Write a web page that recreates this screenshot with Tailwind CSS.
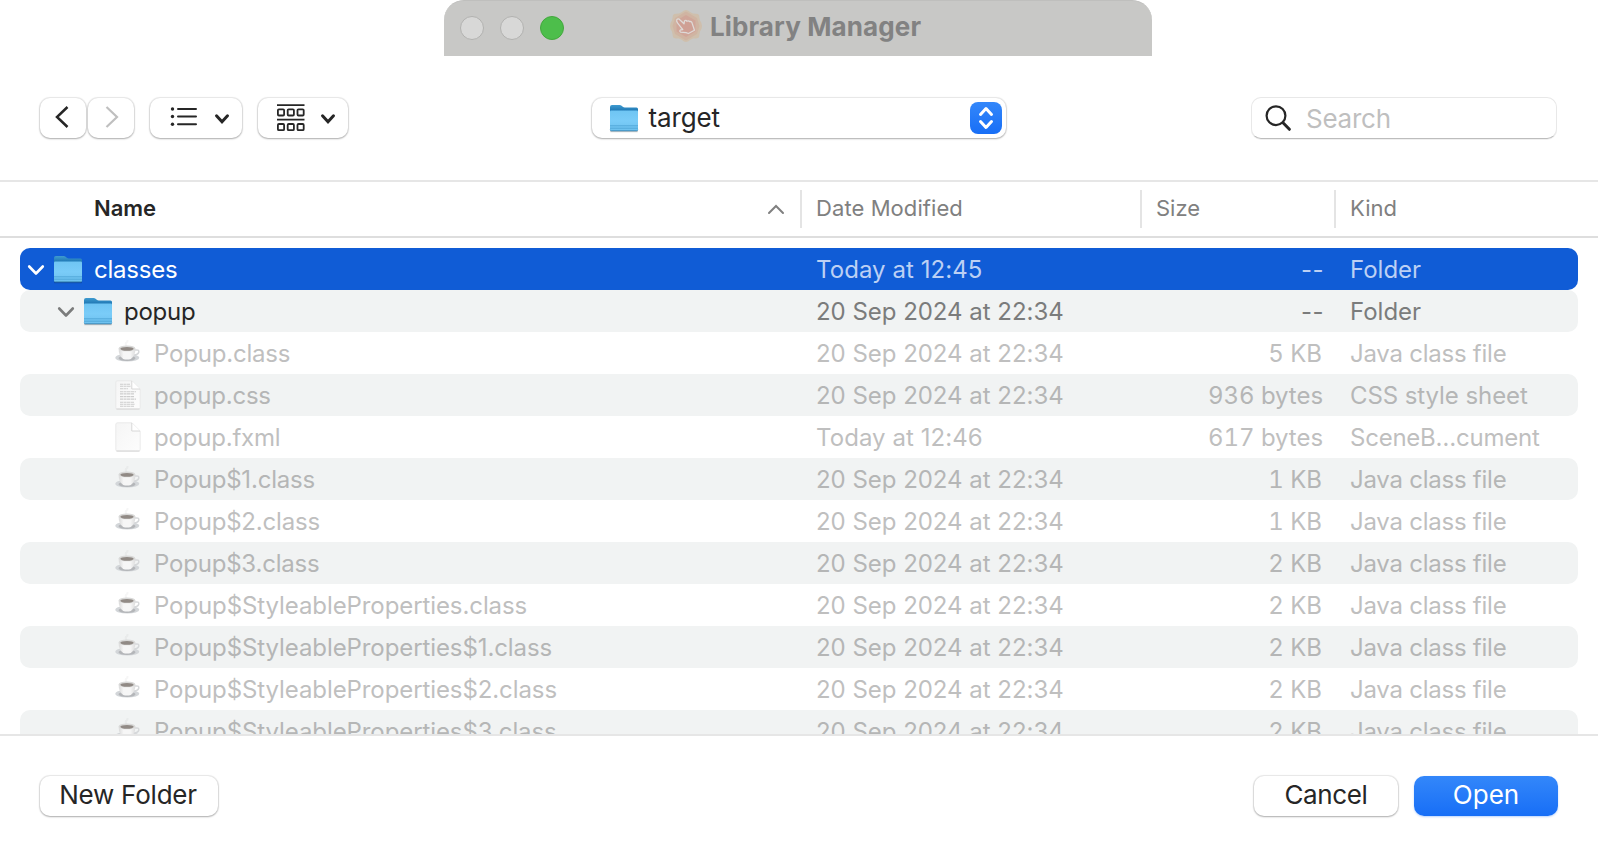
<!DOCTYPE html>
<html lang="en">
<head>
<meta charset="utf-8">
<title>Open</title>
<script src="https://cdn.jsdelivr.net/npm/@tailwindcss/browser@4"></script>
</head>
<body class="flex h-[856px] w-[1598px] flex-col overflow-hidden bg-white font-['Inter',sans-serif] text-[#262626]">

<svg class="absolute size-0">
  <defs>
    <linearGradient id="folderFront" x1="0" y1="0" x2="0" y2="1"><stop offset="0" stop-color="#6fc5f3"/><stop offset=".5" stop-color="#7accf8"/><stop offset="1" stop-color="#6cc0ee"/></linearGradient>
    <linearGradient id="folderBack" x1="0" y1="0" x2="0" y2="1"><stop offset="0" stop-color="#3f9bd0"/><stop offset=".4" stop-color="#1f78b4"/></linearGradient>
    <linearGradient id="paper" x1="0" y1="0" x2="1" y2="1"><stop offset="0" stop-color="#f5f5f5"/><stop offset="1" stop-color="#fdfdfd"/></linearGradient>
    <linearGradient id="cup" x1="0" y1="0" x2="1" y2="0"><stop offset="0" stop-color="#d9d9d9"/><stop offset=".3" stop-color="#f6f6f6"/><stop offset=".7" stop-color="#f6f6f6"/><stop offset="1" stop-color="#dcdcdc"/></linearGradient>
    <symbol id="folder" viewBox="0 0 30 29">
      <path d="M1.200 27h27.600v1.200H1.200z" fill="#000" opacity=".22"/>
      <path d="M1 3q0-2 2-2h7.600q1.200 0 2 .8l1.200 1q.8.8 2 .8H27.500q1.500 0 1.500 1.500V15H1z" fill="url(#folderBack)"/>
      <path d="M1 7.500Q1 6.500 2 6.500H28q1 0 1 1V25.500q0 1.500-1.500 1.500h-25Q1 27 1 25.500z" fill="url(#folderFront)"/>
      <path d="M1 21.800h28M1 24.200h28" stroke="#4ea5d6" stroke-width=".9"/>
      <path d="M1.200 25.800q.3 1 1.300 1h25q1 0 1.300-1" fill="none" stroke="#3a86b4" stroke-width=".9"/>
    </symbol>
    <symbol id="java" viewBox="0 0 26 26">
      <ellipse cx="12.300" cy="17.700" rx="12" ry="3.900" fill="#d3d6d9"/>
      <ellipse cx="12" cy="18.300" rx="8.500" ry="2.600" fill="#b4b6b9"/>
      <path d="M20 10q4.200-.6 3.800 2-.5 2.600-5.200 3.200" fill="none" stroke="#d6d8da" stroke-width="1.500"/>
      <path d="M3.600 8.500q0 7.500 4.600 10.400 3.800 1.400 7.600 0 4.600-2.900 4.600-10.400z" fill="url(#cup)"/>
      <ellipse cx="12" cy="8.400" rx="8.400" ry="2.900" fill="#d9d9d8"/>
      <ellipse cx="12" cy="8.800" rx="6.600" ry="1.900" fill="#918a85"/>
      <path d="M11.500 5.500q-1.500-1.500 0-3t.5-2.500" fill="none" stroke="#888" stroke-width="2" opacity=".08"/>
    </symbol>
    <symbol id="doc" viewBox="0 0 26 30">
      <path d="M.8 2.500Q.8.800 2.500.800H17L25.200 9V27.500q0 1.700-1.700 1.700h-21Q.8 29.200.8 27.500z" fill="url(#paper)" stroke="#e6e6e6" stroke-width=".8"/>
      <path d="M1.500 29h23" stroke="#d4d4d4" stroke-width="1"/>
      <path d="M16.800 1V9H25z" fill="#fff"/><path d="M16.800 1V9H25" fill="none" stroke="#d4d4d4" stroke-width=".9"/>
    </symbol>
    <symbol id="css" viewBox="0 0 26 30">
      <use href="#doc"/>
      <g stroke="#cdcdcd" stroke-width="1.100" fill="none" stroke-dasharray="3.500 .5 2 .4 4 .5">
        <path d="M5 4.200h10M5 6.300h11M5 8.700h8M5 11.800h16M5 13.900h14M5 16.600h14M5 19.100h16M5 22.300h14M5 24.300h15M5 26.200h14"/>
      </g>
    </symbol>
  </defs>
</svg>

<!-- Parent window title bar -->
<header class="ml-[444px] flex h-14 w-[708px] shrink-0 items-center rounded-t-[20px] border-t border-[#bfbfbd] bg-[#c8c8c6] pl-4">
  <div class="mb-px flex gap-4">
    <span class="size-6 rounded-full border border-[#b2b2b0] bg-[#d8d8d7]"></span>
    <span class="size-6 rounded-full border border-[#b2b2b0] bg-[#d8d8d7]"></span>
    <span class="size-6 rounded-full border border-[#43a83d] bg-[#4dbe4b]"></span>
  </div>
  <svg class="mb-[5px] ml-[106px] size-8" viewBox="0 0 32 32">
    <path d="M16 0q2 0 4 2l3 1.500q3 .2 5 .500 1.500 1 1.500 4l.5 2.500Q32 13 32 16t-2 5.500l-.5 2.500q0 3-1.500 4-2 .5-5 .5l-3 1.500q-2 2-4 2t-4-2l-3-1.500q-3 0-5-.5-1.500-1-1.500-4L2 21.500Q0 19 0 16t2-5.500L2.500 8q0-3 1.500-4 2-.3 5-.5L12 2q2-2 4-2z" fill="#cfbfac"/>
    <path d="M16 1.500l11 6.500 2.500 8-2.500 8-11 6.500L5 24l-2.500-8L5 8z" fill="#d0b4a2"/>
    <path d="M16 5l9.500 5.500v11L16 27l-9.500-5.500v-11z" fill="#d0a699"/>
    <path d="M6.800 9.600q1.500-1.500 3 .2l4.200 4 .5-2.800q1.300-1.200 2.500.3 1.500-1.100 2.600.4 1.600-.7 2.300.9l1.800 5.300.7 2.400-6 3.200-2.300-.8-5.600-.6q-1.500-1.300.3-2.300l2-.2-5.300-6.800q-1.300-1.500-.7-3.200z" fill="#cfa095" stroke="#dedad8" stroke-width="1.300" stroke-linejoin="round"/>
  </svg>
  <h1 class="mb-[3px] ml-2 text-[26px] leading-8 font-bold tracking-[0.12px] text-[#828282]">Library Manager</h1>
</header>

<!-- Toolbar -->
<div class="flex h-[124px] shrink-0 items-start pt-[42px] pl-10">
  <button class="flex h-10 w-[46px] items-center justify-center rounded-[10px] bg-white shadow-[0_0_1px_1px_rgba(0,0,0,0.09),0_1px_2px_rgba(0,0,0,0.26)]">
    <svg class="mr-[3px] mb-[3px] h-6 w-4" viewBox="0 0 16 24"><path d="M13.500 2 3 12l10.500 10" fill="none" stroke="#262626" stroke-width="2.500"/></svg>
  </button>
  <button class="ml-0.5 flex h-10 w-[46px] items-center justify-center rounded-[10px] bg-white shadow-[0_0_1px_1px_rgba(0,0,0,0.09),0_1px_2px_rgba(0,0,0,0.26)]">
    <svg class="mb-[3px] ml-0.5 h-6 w-4" viewBox="0 0 16 24"><path d="M2.500 2 13 12 2.500 22" fill="none" stroke="#bfbfbf" stroke-width="2.200"/></svg>
  </button>
  <button class="ml-4 flex h-10 w-[92px] items-start rounded-[10px] bg-white pt-[9px] pl-5 shadow-[0_0_1px_1px_rgba(0,0,0,0.09),0_1px_2px_rgba(0,0,0,0.26)]">
    <svg class="h-5 w-7" viewBox="0 0 28 20"><path d="M8 2h18M8 9.500h18M8 17.300h18" stroke="#262626" stroke-width="2" stroke-linecap="round"/><g fill="#262626"><circle cx="2.500" cy="2" r="1.700"/><circle cx="2.500" cy="9.500" r="1.700"/><circle cx="2.500" cy="17.300" r="1.700"/></g></svg>
    <svg class="mt-1.5 ml-4 h-3 w-4" viewBox="0 0 16 12"><path d="m2.500 2.800 5.500 6 5.500-6" fill="none" stroke="#262626" stroke-width="3" stroke-linecap="round"/></svg>
  </button>
  <button class="ml-4 flex h-10 w-[90px] items-start rounded-[10px] bg-white pt-1.5 pl-[19px] shadow-[0_0_1px_1px_rgba(0,0,0,0.09),0_1px_2px_rgba(0,0,0,0.26)]">
    <svg class="h-7 w-7" viewBox="0 0 28 28" fill="none" stroke="#262626" stroke-width="1.800"><path d="M0 1.200h27.500M0 15.700h27.500"/><g id="cells"><rect x=".9" y="5.300" width="6.200" height="6.200" rx="1"/><rect x="10.700" y="5.300" width="6.200" height="6.200" rx="1"/><rect x="20.500" y="5.300" width="6.200" height="6.200" rx="1"/></g><use href="#cells" y="14.700"/></svg>
    <svg class="mt-[9px] ml-[15px] h-3 w-4" viewBox="0 0 16 12"><path d="m2.500 2.800 5.500 6 5.500-6" fill="none" stroke="#262626" stroke-width="3" stroke-linecap="round"/></svg>
  </button>

  <button class="ml-[244px] flex h-10 w-[414px] items-start rounded-[10px] bg-white pt-1 pr-1 pl-[17px] text-left shadow-[0_0_1px_1px_rgba(0,0,0,0.09),0_1px_2px_rgba(0,0,0,0.26)]">
    <svg class="mt-[2px] h-[29px] w-[30px]"><use href="#folder"/></svg>
    <span class="-mt-1 ml-[9.500px] flex-1 text-[26px] leading-[39px] tracking-[-0.14px]">target</span>
    <svg class="size-8 rounded-lg bg-linear-to-b from-[#3387fa] to-[#176ef6]" viewBox="0 0 32 32"><path d="m10.500 12.500 5.500-6 5.500 6M10.500 19.500l5.500 6 5.500-6" fill="none" stroke="#fff" stroke-width="3" stroke-linecap="round" stroke-linejoin="round"/></svg>
  </button>

  <div class="-mt-px ml-[245px] flex h-[42px] w-[306px] items-start rounded-[10px] border border-[#e8e8e8] border-b-[#bdbdbd] bg-white pl-[13px] shadow-[0_1px_0_rgba(0,0,0,0.06)]">
    <svg class="mt-[7px] size-[27px]" viewBox="0 0 27 27" fill="none" stroke="#262626"><circle cx="11" cy="10.700" r="9.400" stroke-width="2.200"/><path d="m18 17.800 6.400 6.500" stroke-width="3" stroke-linecap="round"/></svg>
    <span class="ml-[14px] text-[26px] leading-[41px] tracking-[-0.25px] text-[#bfbfbf]">Search</span>
  </div>
</div>

<!-- Column headings -->
<div class="flex h-[58px] shrink-0 border-t-2 border-b-2 border-[#e6e6e6] border-b-[#dedede] text-[22px] leading-[52px] text-[#808080]">
  <div class="flex w-[800px] pl-[94px]">
    <span class="flex-1 font-semibold tracking-[-0.05px] text-[#262626]">Name</span>
    <svg class="mt-[21px] mr-[15px] h-3 w-[18px]" viewBox="0 0 18 12"><path d="m2 10 7-7 7 7" fill="none" stroke="#808080" stroke-width="2" stroke-linecap="round"/></svg>
  </div>
  <div class="mt-2 h-[38px] w-0.5 bg-[#e4e4e4]"></div>
  <div class="w-[338px] pl-[14px] tracking-[0.08px]">Date Modified</div>
  <div class="mt-2 h-[38px] w-0.5 bg-[#e4e4e4]"></div>
  <div class="w-[192px] pl-[14px]">Size</div>
  <div class="mt-2 h-[38px] w-0.5 bg-[#e4e4e4]"></div>
  <div class="pl-[14px]">Kind</div>
</div>

<!-- File list -->
<main id="list" class="h-[496px] shrink-0 overflow-hidden px-5 pt-2.5 text-[24px] leading-[44px]"></main>

<!-- Dialog buttons -->
<footer class="flex flex-1 items-start border-t-2 border-[#e6e6e6] px-10 pt-10 text-[26px] leading-[38px]">
  <button class="h-10 w-[178px] rounded-[10px] bg-white pr-0.5 pb-0.5 tracking-[-0.22px] shadow-[0_0_1px_1px_rgba(0,0,0,0.09),0_1px_2px_rgba(0,0,0,0.26)]">New Folder</button>
  <button class="ml-auto h-10 w-36 rounded-[10px] bg-white pb-0.5 tracking-[-0.35px] shadow-[0_0_1px_1px_rgba(0,0,0,0.09),0_1px_2px_rgba(0,0,0,0.26)]">Cancel</button>
  <button class="ml-4 h-10 w-36 rounded-[10px] bg-linear-to-b from-[#3387fa] to-[#176ef6] pb-0.5 text-white shadow-[0_1px_2px_rgba(23,110,246,0.3)]">Open</button>
</footer>

<script>
  const D = '20 Sep 2024 at 22:34', J = 'Java class file';
  const files = [
    ['java', 'Popup.class', D, '5 KB', J],
    ['css', 'popup.css', D, '936 bytes', 'CSS style sheet'],
    ['doc', 'popup.fxml', 'Today at 12:46', '617 bytes', 'SceneB…cument'],
    ['java', 'Popup$1.class', D, '1 KB', J],
    ['java', 'Popup$2.class', D, '1 KB', J],
    ['java', 'Popup$3.class', D, '2 KB', J],
    ['java', 'Popup$StyleableProperties.class', D, '2 KB', J],
    ['java', 'Popup$StyleableProperties$1.class', D, '2 KB', J],
    ['java', 'Popup$StyleableProperties$2.class', D, '2 KB', J],
    ['java', 'Popup$StyleableProperties$3.class', D, '2 KB', J],
  ];
  const chevron = '<svg class="mt-[16px] h-3 w-[18px]" viewBox="0 0 18 12"><path d="m2.200 2.500 6.800 7 6.800-7" fill="none" stroke="currentColor" stroke-width="2.600" stroke-linecap="round" stroke-linejoin="round"/></svg>';
  const folder = '<svg class="mt-[7px] ml-[8px] h-[29px] w-[30px]"><use href="#folder"/></svg>';
  const icons = {
    java: '<svg class="mt-[8px] size-[26px]"><use href="#java"/></svg>',
    css: '<svg class="mt-[6px] h-[30px] w-[26px]"><use href="#css"/></svg>',
    doc: '<svg class="mt-[6px] h-[30px] w-[26px]"><use href="#doc"/></svg>',
  };
  const cells = (date, size, kind) => {
    const sp = kind === J || kind[0] === 'S' ? 'tracking-[-0.24px]' : kind[0] === 'C' ? 'tracking-[-0.08px]' : 'tracking-normal';
    const fmt = size === '--' ? 'tracking-[0.5px]' : size.endsWith('KB') ? 'pr-[2px] tabular-nums' : 'pr-px tabular-nums tracking-[-0.05px]';
    const dt = date === D ? 'tracking-[-0.03px]' : 'tracking-[0.06px]';
    return `<div class="w-[334px] ${dt}">${date}</div><div class="w-[174px] text-right ${fmt}">${size}</div><div class="pl-[26px] ${sp}">${kind}</div>`;
  };
  let html =
    `<div class="flex h-[42px] rounded-[10px] bg-[#105cd6] text-[#bcd0f4]"><div class="flex w-[796px] pl-[7px] text-white">${chevron}${folder}<span class="ml-[11px] tracking-[-0.24px]">classes</span></div>${cells('Today at 12:45', '--', 'Folder')}</div>` +
    `<div class="flex h-[42px] rounded-[10px] bg-[#f1f3f3] text-[#7b7c7c]"><div class="flex w-[796px] pl-[37px]">${chevron}${folder}<span class="ml-[11px] tracking-[-0.24px] text-[#262626]">popup</span></div>${cells(D, '--', 'Folder')}</div>`;
  files.forEach(([icon, name, date, size, kind], i) => {
    const tone = i % 2 ? 'bg-[#f1f3f3] text-[#b5b6b6]' : 'text-[#bfbfbf]';
    html += `<div class="flex h-[42px] rounded-[10px] ${tone}"><div class="flex w-[796px] pl-[95px]">${icons[icon]}<span class="${name.length > 14 ? 'tracking-[-0.09px]' : 'tracking-[-0.2px]'} ml-[13px]">${name}</span></div>${cells(date, size, kind)}</div>`;
  });
  document.getElementById('list').innerHTML = html;
</script>
</body>
</html>
